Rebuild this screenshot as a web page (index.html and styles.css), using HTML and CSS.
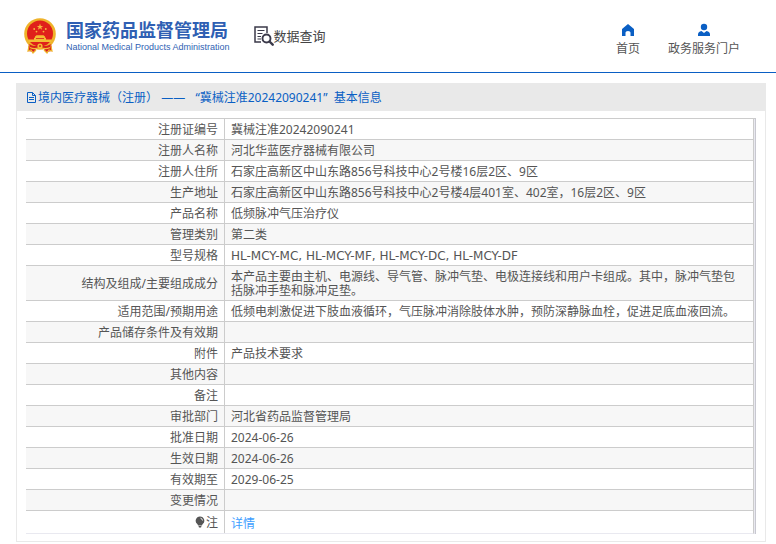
FILE: index.html
```html
<!DOCTYPE html>
<html lang="zh-CN">
<head>
  <meta charset="UTF-8" />
  <title>国家药品监督管理局 数据查询</title>
  <link rel="stylesheet" href="styles.css">
</head>
<body>

  <header class="header">
    <a class="brand" href="#">
      <svg class="emblem" viewBox="0 0 32 36">
        <path d="M5 24 L4 33 L10 34 L12 31 L20 31 L22 34 L28 33 L27 24 Z" fill="#d8201c"/>
        <path d="M5 28 L4 33 L7 32 L9 35 L12 32 M27 28 L28 33 L25 32 L23 35 L20 32" fill="none" stroke="#efb32a" stroke-width="1.2"/>
        <circle cx="16" cy="16" r="15.8" fill="#efb32a"/>
        <circle cx="16" cy="15.5" r="13" fill="#e0201b"/>
        <path d="M16 5.5 L16.8 7.9 L19.3 7.9 L17.3 9.3 L18.1 11.7 L16 10.2 L13.9 11.7 L14.7 9.3 L12.7 7.9 L15.2 7.9 Z" fill="#f6b83c"/>
        <g fill="#f6b83c">
          <circle cx="10.2" cy="11" r="0.9"/>
          <circle cx="12.5" cy="13.6" r="0.9"/>
          <circle cx="19.5" cy="13.6" r="0.9"/>
          <circle cx="21.8" cy="11" r="0.9"/>
        </g>
        <path d="M11 18.5 L12.5 17.3 H19.5 L21 18.5 V19.8 H22 V21.5 H27.5 V24 H4.5 V21.5 H10 V19.8 H11 Z" fill="#f3bd33"/>
        <path d="M12 20.5 H20" stroke="#d8201c" stroke-width="0.8"/>
        <path d="M5 26 Q10 29 12.5 27.5 L16 25.5 L19.5 27.5 Q22 29 27 26 L25 31 Q20 32 16 29.5 Q12 32 7 31 Z" fill="#d8201c"/>
        <path d="M6 29.5 Q11 32 16 29 Q21 32 26 29.5" fill="none" stroke="#f3bd33" stroke-width="1.2"/>
        <circle cx="16" cy="28" r="2.6" fill="#f3bd33"/>
        <circle cx="16" cy="28" r="1" fill="#d8201c"/>
      </svg>
      <span class="brand-text">
        <span class="brand-cn">国家药品监督管理局</span>
        <span class="brand-en">National Medical Products Administration</span>
      </span>
    </a>

    <a class="search-link" href="#">
      <svg class="search-icon" viewBox="0 0 20 20">
        <path d="M13 7 V1 H1 V16 H7" fill="none" stroke="#3b3a4a" stroke-width="1.5"/>
        <path d="M3.5 4.5 H10.5 M3.5 7.5 H8.5 M3.5 10.5 H7 M3.5 13 H7" stroke="#3b3a4a" stroke-width="1.2"/>
        <circle cx="12.5" cy="12.5" r="4" fill="none" stroke="#3b3a4a" stroke-width="1.9"/>
        <path d="M15.5 15.5 L18.7 18.7" stroke="#3b3a4a" stroke-width="2.4" stroke-linecap="round"/>
      </svg>
      <span>数据查询</span>
    </a>

    <nav class="nav">
      <a href="#">
        <svg viewBox="0 0 14 14">
          <path d="M7 1 L13 6 V13 H9.5 V9.5 Q9.5 8 7 8 Q4.5 8 4.5 9.5 V13 H1 V6 Z" fill="#0a5fc4"/>
        </svg>
        首页
      </a>
      <a href="#">
        <svg viewBox="0 0 14 14">
          <circle cx="7" cy="4" r="3.2" fill="#0a5fc4"/>
          <path d="M1 13 V11.5 Q1 8.5 4.5 8 L7 10 L9.5 8 Q13 8.5 13 11.5 V13 Z" fill="#0a5fc4"/>
        </svg>
        政务服务门户
      </a>
    </nav>
  </header>

  <main class="panel">
    <h1 class="panel-title">
      <svg class="doc-icon" viewBox="0 0 11 12">
        <path d="M1.5 0.5 H6.5 L9.5 3.5 V10.5 H1.5 Z M6.5 0.5 V3.5 H9.5 M3 5.5 H8 M3 7.5 H8" fill="none" stroke="#0a5fc4"/>
      </svg>境内医疗器械（注册） <span class="dash">——</span>&nbsp; “冀械注准20242090241” &nbsp;基本信息
    </h1>

    <div class="table-wrap">
      <table class="info">
        <tbody>
          <tr><th scope="row">注册证编号</th><td>冀械注准20242090241</td></tr>
          <tr><th scope="row">注册人名称</th><td>河北华蓝医疗器械有限公司</td></tr>
          <tr><th scope="row">注册人住所</th><td>石家庄高新区中山东路856号科技中心2号楼16层2区、9区</td></tr>
          <tr><th scope="row">生产地址</th><td>石家庄高新区中山东路856号科技中心2号楼4层401室、402室，16层2区、9区</td></tr>
          <tr><th scope="row">产品名称</th><td>低频脉冲气压治疗仪</td></tr>
          <tr><th scope="row">管理类别</th><td>第二类</td></tr>
          <tr><th scope="row">型号规格</th><td class="model">HL-MCY-MC, HL-MCY-MF, HL-MCY-DC, HL-MCY-DF</td></tr>
          <tr><th scope="row">结构及组成/主要组成成分</th><td>本产品主要由主机、电源线、导气管、脉冲气垫、电极连接线和用户卡组成。其中，脉冲气垫包括脉冲手垫和脉冲足垫。</td></tr>
          <tr><th scope="row">适用范围/预期用途</th><td>低频电刺激促进下肢血液循环，气压脉冲消除肢体水肿，预防深静脉血栓，促进足底血液回流。</td></tr>
          <tr><th scope="row">产品储存条件及有效期</th><td></td></tr>
          <tr><th scope="row">附件</th><td>产品技术要求</td></tr>
          <tr><th scope="row">其他内容</th><td></td></tr>
          <tr><th scope="row">备注</th><td></td></tr>
          <tr><th scope="row">审批部门</th><td>河北省药品监督管理局</td></tr>
          <tr><th scope="row">批准日期</th><td>2024-06-26</td></tr>
          <tr><th scope="row">生效日期</th><td>2024-06-26</td></tr>
          <tr><th scope="row">有效期至</th><td>2029-06-25</td></tr>
          <tr><th scope="row">变更情况</th><td></td></tr>
          <tr class="note">
            <th scope="row">
              <svg class="bulb" viewBox="0 0 10 12">
                <path d="M5 0.5 A4.3 4.3 0 0 1 7.5 8.3 L7 9.5 H3 L2.5 8.3 A4.3 4.3 0 0 1 5 0.5 Z" fill="#555"/>
                <path d="M3.5 10 H6.5 L6 11.5 H4 Z" fill="#555"/>
                <path d="M5.5 2.2 Q7.3 2.5 7.5 4.5" fill="none" stroke="#fff" stroke-width="0.9"/>
              </svg>注</th>
            <td><a href="#">详情</a></td>
          </tr>
        </tbody>
      </table>
    </div>
  </main>

</body>
</html>
```
FILE: styles.css
```css
* {
  box-sizing: border-box;
}

body {
  margin: 0;
  background-color: #fff;
  color: #555;
  font-family: "Noto Sans", "Noto Sans CJK SC", sans-serif;
  font-size: 12px;
  line-height: 14px;
}

a {
  text-decoration: none;
}

.header {
  display: flex;
  align-items: center;
  height: 73px;
  padding: 0 36px 0 24px;
  border-bottom: 1px solid #0a5fc4;
}

.brand {
  display: flex;
  align-items: center;
  gap: 10px;
  color: #2f5fb3;
}

.emblem {
  width: 32px;
  height: 36px;
}

.brand-text {
  display: flex;
  flex-direction: column;
}

.brand-cn {
  font-family: "Noto Sans CJK SC", sans-serif;
  font-size: 18px;
  font-weight: 700;
  line-height: 22px;
}

.brand-en {
  font-family: "Liberation Sans", Arial, sans-serif;
  font-size: 9px;
  line-height: 14px;
}

.search-link {
  display: flex;
  align-items: center;
  margin-left: 24px;
  color: #444;
  font-size: 13px;
}

.search-icon {
  width: 20px;
  height: 20px;
}

.nav {
  display: flex;
  gap: 28px;
  margin-left: auto;
  padding-top: 6px;
}

.nav a {
  display: flex;
  flex-direction: column;
  align-items: center;
  gap: 5px;
  color: #555;
}

.nav svg {
  width: 14px;
  height: 14px;
}

.panel {
  margin: 10px 10px 0 16px;
  border: 1px solid #e9e9e9;
}

.panel-title {
  display: flow-root;
  margin: 0;
  padding: 7px 9px 6px;
  background-color: #e9e9e9;
  color: #0a5fc4;
  font-size: 12px;
  font-weight: 400;
  line-height: 14px;
}

.doc-icon {
  width: 11px;
  height: 12px;
  margin-right: 1px;
  vertical-align: -2px;
}

.dash {
  margin-right: 4px;
}

.table-wrap {
  margin: 7px 9px;
  padding-right: 1px;
  border-top: 1px solid #ccc;
  border-right: 1px solid #c8c8d0;
  background-color: #e9e9f0;
}

.info {
  width: 100%;
  border-spacing: 0;
  border-right: 1px solid #ccc;
  border-bottom: 1px solid #e9e9f0;
  background-color: #fff;
}

.info th,
.info td {
  height: 21px;
  padding: 4px 6px 2px;
  border-bottom: 1px solid #ccc;
  vertical-align: middle;
}

.info th {
  width: 199px;
  border-right: 1px solid #ccc;
  font-weight: 400;
  text-align: right;
}

.info td {
  padding-right: 12px;
  text-align: left;
}

.info .model {
  font-family: "DejaVu Sans", sans-serif;
}

.info tr:nth-child(even) {
  background-color: #f7f7f7;
}

.info .note th,
.info .note td {
  height: 22px;
  border-bottom: none;
}

.info .note td {
  padding-top: 6px;
}

.info a {
  color: #409eff;
}

.bulb {
  width: 10px;
  height: 12px;
  margin-right: 1px;
  vertical-align: -1px;
}
```
